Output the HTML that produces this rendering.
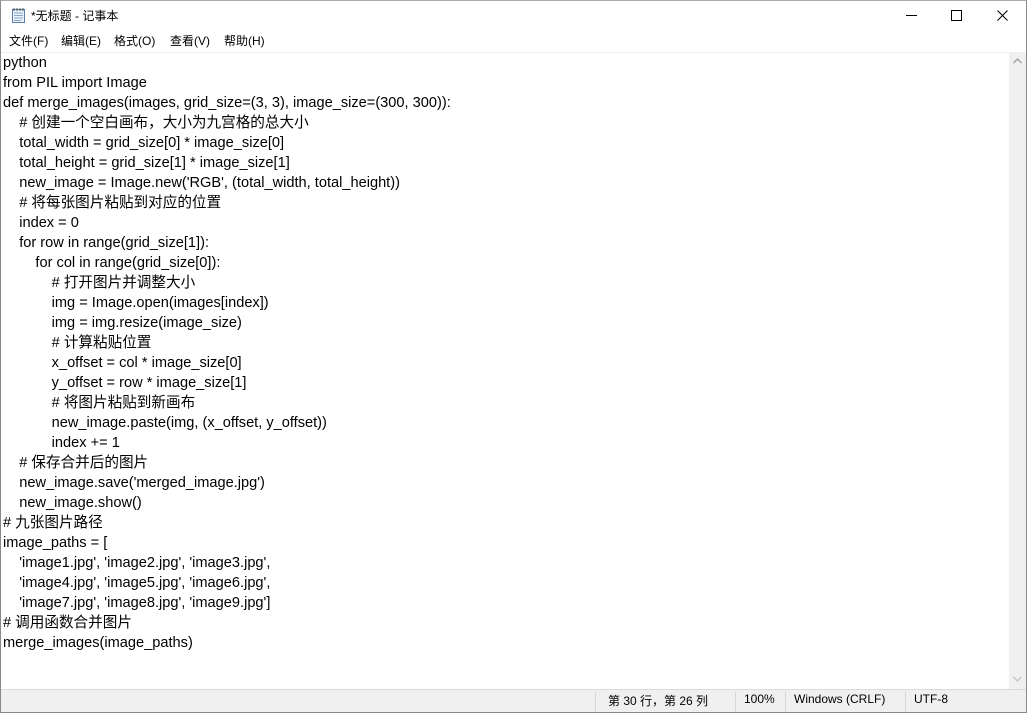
<!DOCTYPE html>
<html><head><meta charset="utf-8"><style>
*{margin:0;padding:0;box-sizing:border-box}
body{width:1027px;height:713px;background:#fff;overflow:hidden;position:relative;font-family:"Liberation Sans","Noto Sans CJK SC",sans-serif;color:#000}
.win{position:absolute;left:0;top:0;width:1027px;height:713px;border:1px solid #8a8a8a;border-top:1px solid #aaa}
.title{position:absolute;left:0;top:0;width:1025px;height:31px;font-size:12px}
.title span{position:absolute;left:30px;top:6px}
.menu{position:absolute;left:0;top:31px;height:19px;font-size:12px;width:1025px}
.menu span{position:absolute;top:0px}
.edit{position:absolute;left:0;top:51px;width:1008px;height:637px;border-top:1px solid #f0f0f0}
.edit pre{font-family:"Liberation Sans","Noto Sans CJK SC",sans-serif;font-size:14.6px;line-height:20px;position:absolute;left:2px;top:0px;white-space:pre}
.sb{position:absolute;left:1008px;top:51px;width:17px;height:637px;background:#f0f0f0}
.status{position:absolute;left:0;top:688px;width:1025px;height:23px;background:#f0f0f0;border-top:1px solid #dadada;font-size:12px}
.status span{position:absolute;top:2px}
.status i{position:absolute;top:2px;width:1px;height:20px;background:#d6d6d6}
</style></head><body>
<div class="win">
<div class="title">
<svg style="position:absolute;left:10px;top:6px" width="16" height="17" viewBox="0 0 16 17"><rect x="1.5" y="2.5" width="12" height="13" fill="#eaf3fb" stroke="#5b7fa8"/><path d="M3 6h9M3 8.5h9M3 11h9M3 13.5h7" stroke="#8aa9c8"/><path d="M3 1v3M6 1v3M9 1v3M12 1v3" stroke="#555"/></svg>
<span>*无标题 - 记事本</span>
<svg style="position:absolute;left:905px;top:14px" width="12" height="2"><rect width="11" height="1" fill="#000"/></svg>
<svg style="position:absolute;left:950px;top:9px" width="12" height="12"><rect x="0.5" y="0.5" width="10" height="10" fill="none" stroke="#000"/></svg>
<svg style="position:absolute;left:996px;top:9px" width="12" height="12"><path d="M0.5 0.5L10.5 10.5M10.5 0.5L0.5 10.5" stroke="#000"/></svg>
</div>
<div class="menu"><span style="left:8px">文件(F)</span><span style="left:60px">编辑(E)</span><span style="left:113px">格式(O)</span><span style="left:169px">查看(V)</span><span style="left:223px">帮助(H)</span></div>
<div class="edit"><pre>python
from PIL import Image
def merge_images(images, grid_size=(3, 3), image_size=(300, 300)):
    # 创建一个空白画布，大小为九宫格的总大小
    total_width = grid_size[0] * image_size[0]
    total_height = grid_size[1] * image_size[1]
    new_image = Image.new('RGB', (total_width, total_height))
    # 将每张图片粘贴到对应的位置
    index = 0
    for row in range(grid_size[1]):
        for col in range(grid_size[0]):
            # 打开图片并调整大小
            img = Image.open(images[index])
            img = img.resize(image_size)
            # 计算粘贴位置
            x_offset = col * image_size[0]
            y_offset = row * image_size[1]
            # 将图片粘贴到新画布
            new_image.paste(img, (x_offset, y_offset))
            index += 1
    # 保存合并后的图片
    new_image.save('merged_image.jpg')
    new_image.show()
# 九张图片路径
image_paths = [
    'image1.jpg', 'image2.jpg', 'image3.jpg',
    'image4.jpg', 'image5.jpg', 'image6.jpg',
    'image7.jpg', 'image8.jpg', 'image9.jpg']
# 调用函数合并图片
merge_images(image_paths)</pre></div>
<div class="sb">
<svg style="position:absolute;left:4px;top:6px" width="9" height="6"><path d="M0.5 5L4.5 1L8.5 5" fill="none" stroke="#a3a3a3" stroke-width="1.5"/></svg>
<svg style="position:absolute;left:4px;top:624px" width="9" height="6"><path d="M0.5 1L4.5 5L8.5 1" fill="none" stroke="#c8c8c8" stroke-width="1.5"/></svg>
</div>
<div class="status">
<i style="left:594px"></i><span style="left:607px">第 30 行，第 26 列</span>
<i style="left:734px"></i><span style="left:743px">100%</span>
<i style="left:784px"></i><span style="left:793px">Windows (CRLF)</span>
<i style="left:904px"></i><span style="left:913px">UTF-8</span>
</div>
</div>
</body></html>
